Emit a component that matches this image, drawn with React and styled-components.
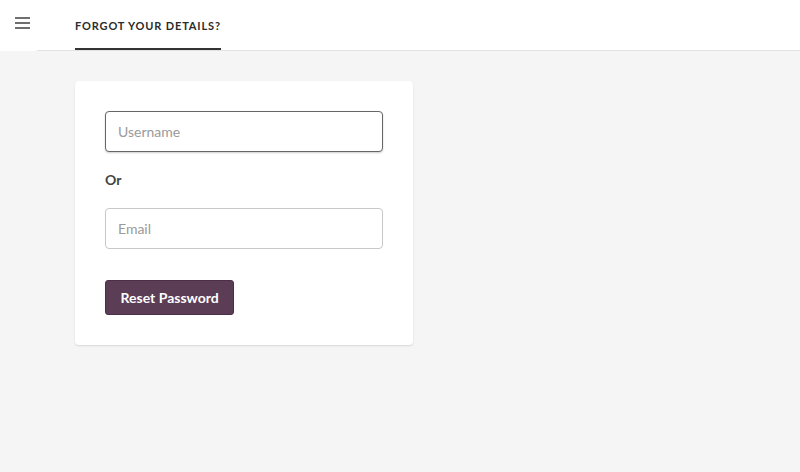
import React from "react"
import styled, { createGlobalStyle } from "styled-components"

const Global = createGlobalStyle`
  html, body {
    margin: 0;
    padding: 0;
    background: #f5f5f5;
    font-family: Lato, "Liberation Sans", sans-serif;
    color: #333;
  }
`

const Header = styled.header`
  display: flex;
  align-items: stretch;
  height: 50px;
  background: #fff;
  border-bottom: 1px solid #e3e3e3;
`

const MenuButton = styled.div`
  width: 38px;
  height: 51px;
  background: #fff;
  display: flex;
  flex-direction: column;
  align-items: flex-start;
  padding: 17px 0 0 15px;
  box-sizing: border-box;
  gap: 3px;
  margin-right: 37px;
  border-radius: 0 0 3px 0;

  & span {
    display: block;
    width: 15px;
    height: 2px;
    background: #6f6f6f;
  }
`

const Tab = styled.div`
  display: flex;
  align-items: center;
  height: 50px;
  box-sizing: border-box;
  padding-top: 2px;
  font-size: 11px;
  font-weight: 700;
  letter-spacing: 0.85px;
  color: #2b2b2b;
  border-bottom: 2px solid #333;
  margin-bottom: -1px;
`

const Main = styled.main`
  padding: 30px 75px;
`

const Card = styled.div`
  width: 338px;
  box-sizing: border-box;
  background: #fff;
  border-radius: 4px;
  box-shadow: 0 1px 2px rgba(0, 0, 0, 0.12);
  padding: 30px;
  display: flex;
  flex-direction: column;
  align-items: flex-start;
`

const Input = styled.input`
  width: 278px;
  height: 41px;
  box-sizing: border-box;
  border: 1px solid ${props => (props.focused ? "#666" : "#c8c8c8")};
  border-radius: 4px;
  padding: 0 12px;
  font-family: inherit;
  font-size: 14px;
  color: #333;
  outline: none;
  box-shadow: ${props => (props.focused ? "0 1px 2px rgba(0,0,0,0.2)" : "none")};

  &::placeholder {
    color: #9a9a9a;
  }
`

const Or = styled.div`
  font-size: 14px;
  font-weight: 700;
  color: #444;
  margin: 19px 0 20px;
  line-height: 17px;
`

const Button = styled.button`
  margin-top: 31px;
  height: 35px;
  padding: 0 14.5px;
  background: #5b3d56;
  border: 1px solid #4a2f46;
  border-radius: 3px;
  color: #fff;
  font-family: inherit;
  font-size: 14px;
  font-weight: 700;
  cursor: pointer;
`

const App = () => {
  return (
    <>
      <Global />
      <Header>
        <MenuButton>
          <span />
          <span />
          <span />
        </MenuButton>
        <Tab>FORGOT YOUR DETAILS?</Tab>
      </Header>
      <Main>
        <Card>
          <Input focused placeholder="Username" />
          <Or>Or</Or>
          <Input placeholder="Email" />
          <Button>Reset Password</Button>
        </Card>
      </Main>
    </>
  )
}

export default App
